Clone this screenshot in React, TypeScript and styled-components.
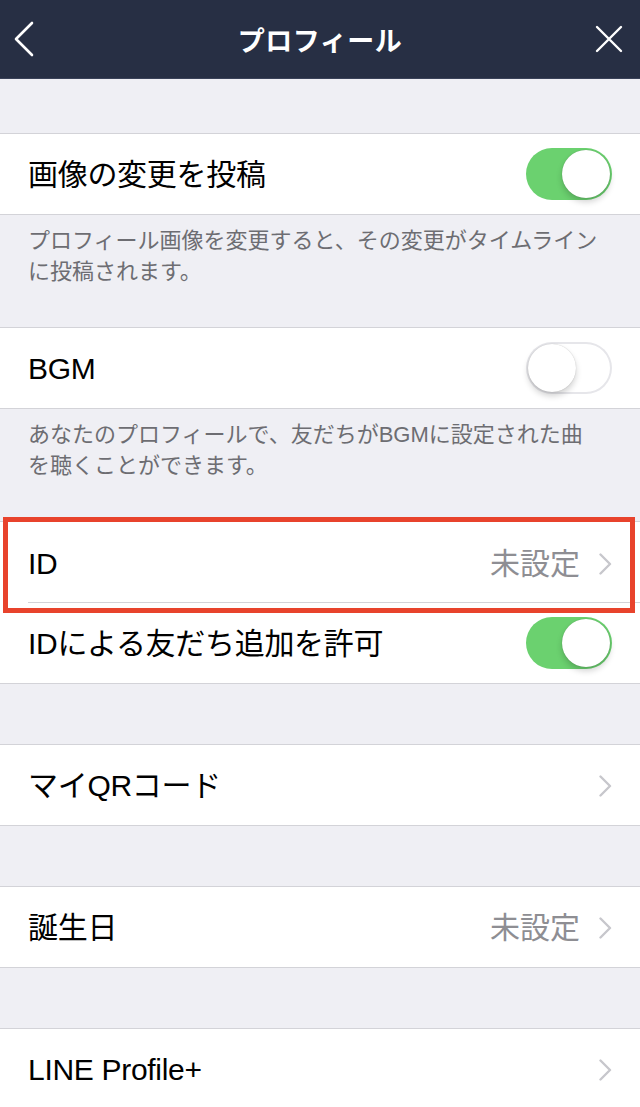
import React from "react";
import styled, { createGlobalStyle, css } from "styled-components";

const GlobalStyle = createGlobalStyle`
  html, body {
    margin: 0;
    padding: 0;
    background: #efeff4;
  }
  body {
    font-family: "Liberation Sans", "Noto Sans CJK JP", sans-serif;
    -webkit-font-smoothing: antialiased;
  }
  * { box-sizing: border-box; }
`;

const Screen = styled.div`
  width: 640px;
  min-height: 1107px;
  background: #efeff4;
  display: flex;
  flex-direction: column;
  overflow: hidden;
`;

const NavBar = styled.header`
  height: 79px;
  background: #272f44;
  border-bottom: 1px solid #3a4259;
  display: grid;
  grid-template-columns: 60px 1fr 60px;
  align-items: center;
`;

const NavButton = styled.div<{ $align: "start" | "end" }>`
  display: flex;
  align-items: center;
  justify-content: ${(p) => (p.$align === "start" ? "flex-start" : "flex-end")};
  padding: ${(p) => (p.$align === "start" ? "0 0 0 13px" : "0 17px 0 0")};
  height: 100%;
`;

const Title = styled.h1`
  margin: 0;
  text-align: center;
  color: #ffffff;
  font-family: "Noto Sans CJK JP", sans-serif;
  font-weight: 700;
  font-size: 27px;
  line-height: 1;
  letter-spacing: 0.5px;
`;

const Spacer = styled.div<{ $h: number }>`
  height: ${(p) => p.$h}px;
  flex: none;
`;

const Group = styled.section`
  background: #ffffff;
  border-top: 1px solid #d3d3d8;
  border-bottom: 1px solid #d3d3d8;
  display: flex;
  flex-direction: column;
`;

const Row = styled.div<{ $divider?: boolean }>`
  position: relative;
  height: ${(p) => (p.$divider ? 81 : 80)}px;
  padding: 2px 28px 0;
  display: flex;
  align-items: center;
  justify-content: space-between;
  ${(p) =>
    p.$divider &&
    css`
      &::after {
        content: "";
        position: absolute;
        left: 28px;
        right: 0;
        bottom: 0;
        height: 1px;
        background: #d3d3d8;
      }
    `}
`;

const Label = styled.span`
  font-size: 30px;
  line-height: 36px;
  color: #000000;
  letter-spacing: -0.3px;
`;

const Detail = styled.div`
  display: flex;
  align-items: center;
  gap: 19px;
`;

const Value = styled.span`
  font-size: 30px;
  line-height: 36px;
  color: #8e8e93;
`;

const Footer = styled.p`
  margin: 0;
  padding: 10px 24px 40px 28px;
  color: #6d6d72;
  font-size: 22px;
  line-height: 31px;
`;

const ToggleTrack = styled.div<{ $on: boolean }>`
  width: 86px;
  height: 52px;
  border-radius: 26px;
  flex: none;
  display: flex;
  align-items: center;
  padding: 2px;
  margin-top: -2px;
  justify-content: ${(p) => (p.$on ? "flex-end" : "flex-start")};
  background: ${(p) => (p.$on ? "#6bd16f" : "#ffffff")};
  box-shadow: ${(p) => (p.$on ? "none" : "inset 0 0 0 2px #e6e6ea")};
`;

const ToggleKnob = styled.div`
  width: 48px;
  height: 48px;
  border-radius: 50%;
  background: #ffffff;
  box-shadow: 0 4px 6px rgba(0, 0, 0, 0.18), 0 0 1px rgba(0, 0, 0, 0.25);
`;

const Highlight = styled.div`
  position: absolute;
  top: -5px;
  left: 3px;
  right: 5px;
  bottom: -10px;
  border: 5px solid #e8432c;
  z-index: 2;
  pointer-events: none;
`;

const Toggle = ({ on }: { on: boolean }) => (
  <ToggleTrack $on={on}>
    <ToggleKnob />
  </ToggleTrack>
);

const Chevron = () => (
  <svg width="13" height="22" viewBox="0 0 13 22" fill="none">
    <path d="M1.5 1.5 L11 11 L1.5 20.5" stroke="#c7c7cc" strokeWidth="2.4" strokeLinecap="round" strokeLinejoin="round" />
  </svg>
);

const BackIcon = () => (
  <svg width="22" height="36" viewBox="0 0 22 36" fill="none">
    <path d="M19 2 L3 18 L19 34" stroke="#ffffff" strokeWidth="2.6" strokeLinecap="round" strokeLinejoin="round" />
  </svg>
);

const CloseIcon = () => (
  <svg width="28" height="28" viewBox="0 0 28 28" fill="none">
    <path d="M2 2 L26 26 M26 2 L2 26" stroke="#ffffff" strokeWidth="2.4" strokeLinecap="round" />
  </svg>
);

export default function App() {
  return (
    <>
      <GlobalStyle />
      <Screen>
        <NavBar>
          <NavButton $align="start">
            <BackIcon />
          </NavButton>
          <Title>プロフィール</Title>
          <NavButton $align="end">
            <CloseIcon />
          </NavButton>
        </NavBar>

        <Spacer $h={54} />
        <Group>
          <Row>
            <Label>画像の変更を投稿</Label>
            <Toggle on />
          </Row>
        </Group>
        <Footer>
          プロフィール画像を変更すると、その変更がタイムライン
          <br />
          に投稿されます。
        </Footer>

        <Group>
          <Row>
            <Label>BGM</Label>
            <Toggle on={false} />
          </Row>
        </Group>
        <Footer>
          あなたのプロフィールで、友だちがBGMに設定された曲
          <br />
          を聴くことができます。
        </Footer>

        <Group>
          <Row $divider>
            <Label>ID</Label>
            <Detail>
              <Value>未設定</Value>
              <Chevron />
            </Detail>
            <Highlight />
          </Row>
          <Row>
            <Label>IDによる友だち追加を許可</Label>
            <Toggle on />
          </Row>
        </Group>

        <Spacer $h={60} />
        <Group>
          <Row>
            <Label>マイQRコード</Label>
            <Chevron />
          </Row>
        </Group>

        <Spacer $h={60} />
        <Group>
          <Row>
            <Label>誕生日</Label>
            <Detail>
              <Value>未設定</Value>
              <Chevron />
            </Detail>
          </Row>
        </Group>

        <Spacer $h={60} />
        <Group>
          <Row>
            <Label>LINE Profile+</Label>
            <Chevron />
          </Row>
        </Group>
      </Screen>
    </>
  );
}
